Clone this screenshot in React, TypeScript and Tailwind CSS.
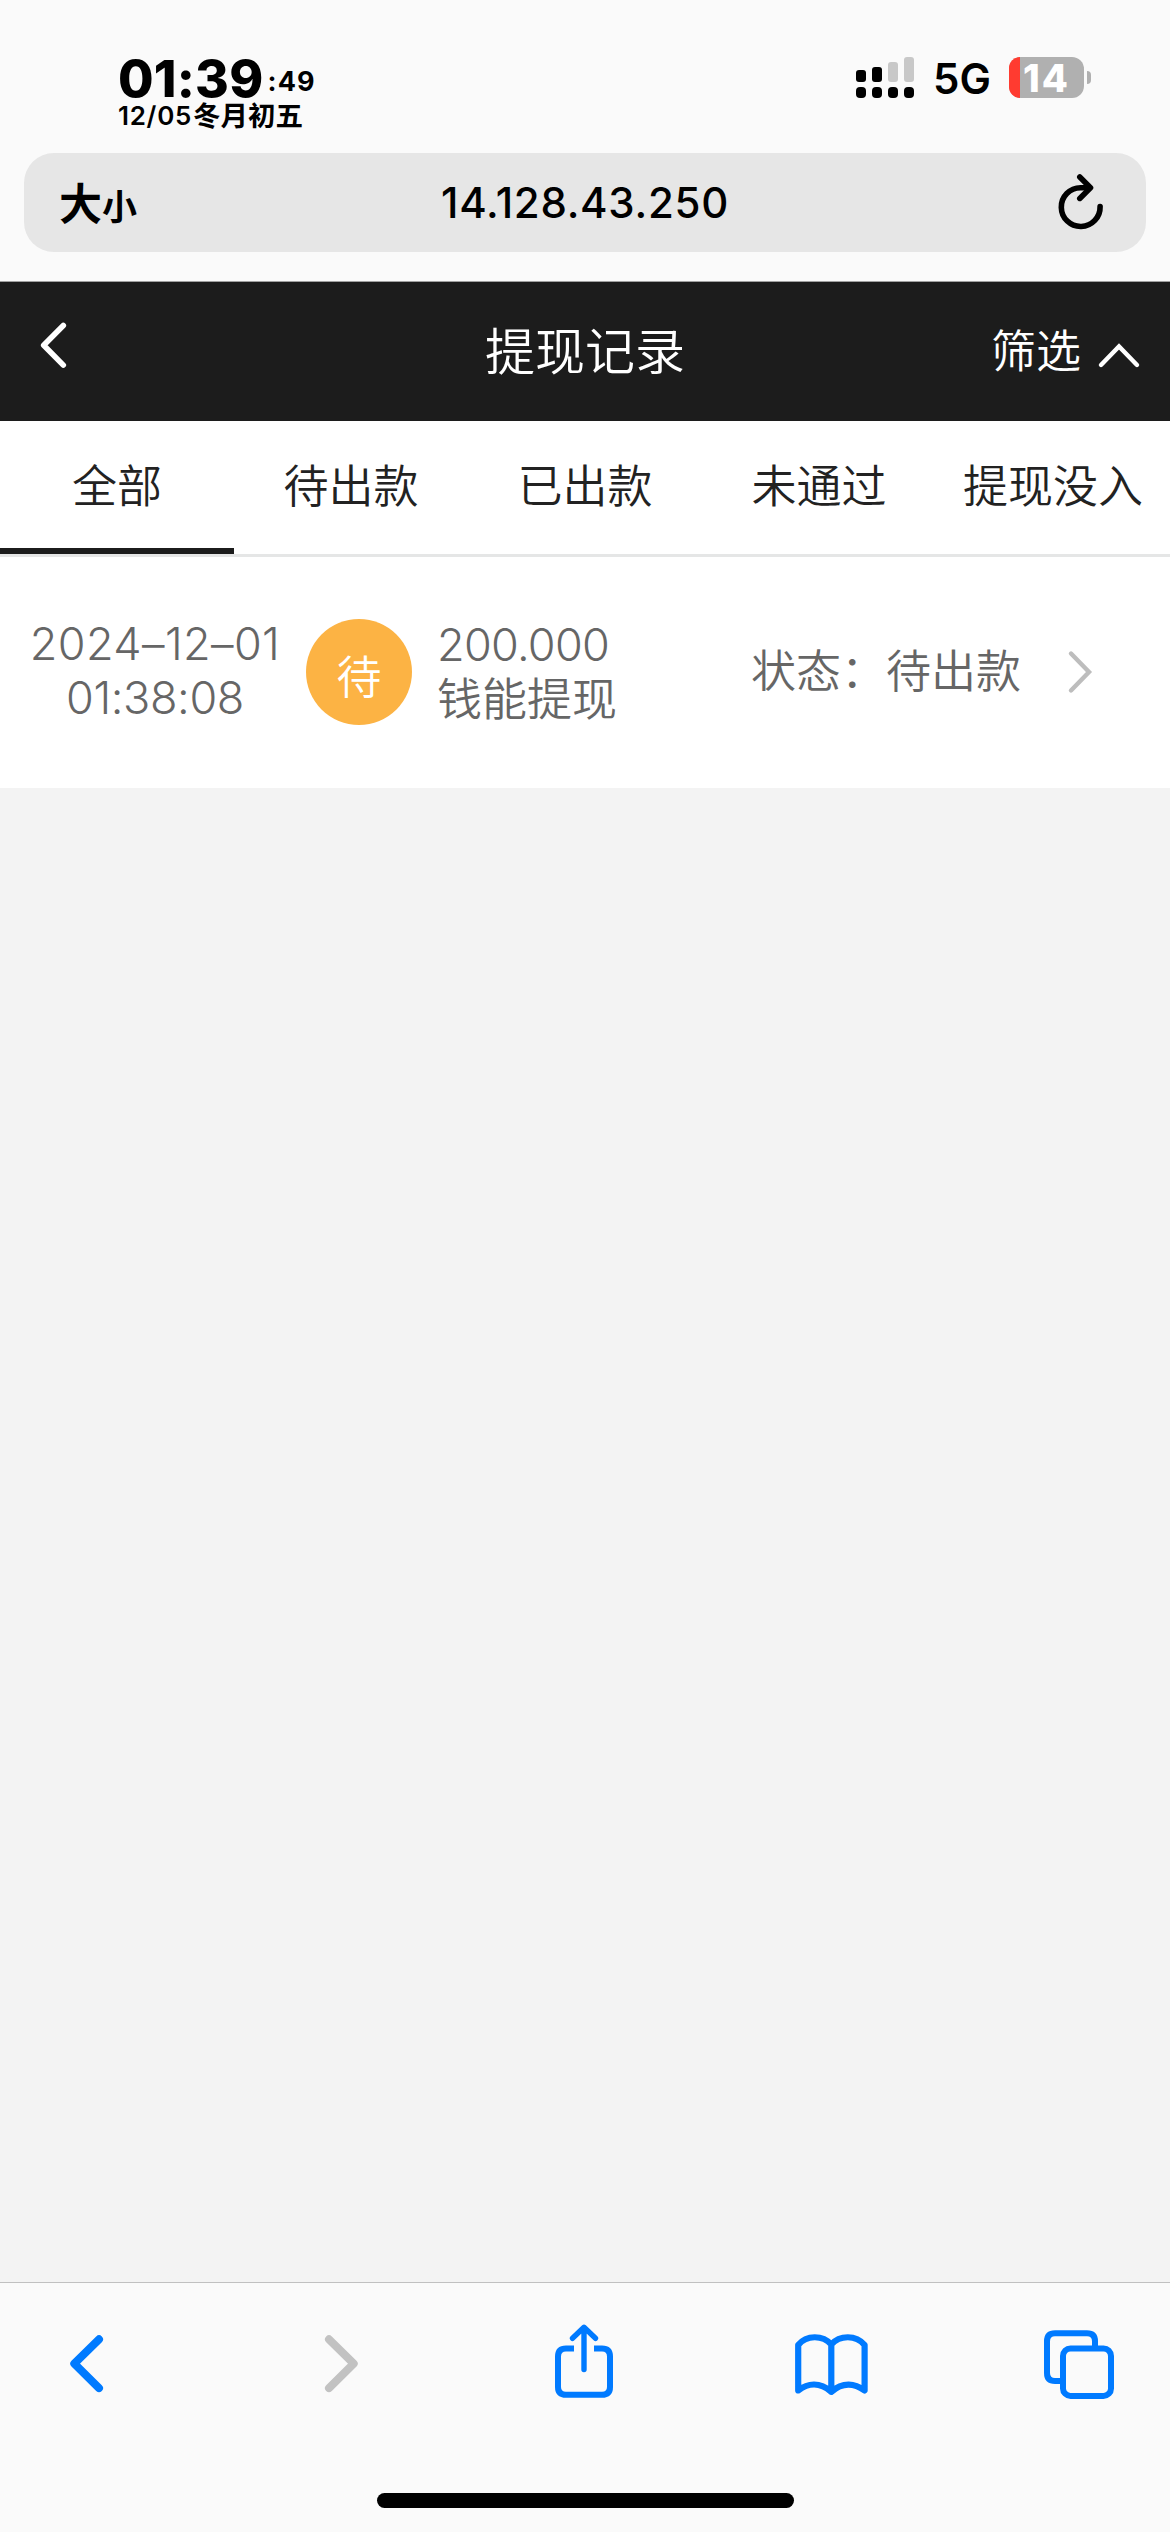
import React from 'react';

interface Tab {
  id: string;
  label: string;
}

interface WithdrawRecord {
  date: string;
  time: string;
  badge: string;
  amount: string;
  method: string;
  status: string;
}

const tabs: Tab[] = [
  { id: 'all', label: '全部' },
  { id: 'pending', label: '待出款' },
  { id: 'paid', label: '已出款' },
  { id: 'rejected', label: '未通过' },
  { id: 'forfeited', label: '提现没入' },
];

const records: WithdrawRecord[] = [
  {
    date: '2024–12–01',
    time: '01:38:08',
    badge: '待',
    amount: '200.000',
    method: '钱能提现',
    status: '待出款',
  },
];

const SignalIcon: React.FC = () => (
  <svg width="58" height="41" viewBox="0 0 58 41" className="mt-[57px]">
    <rect x="0" y="13" width="10" height="12" rx="3" fill="#000" />
    <rect x="16" y="10" width="10" height="15" rx="3" fill="#000" />
    <rect x="32" y="5" width="10" height="20" rx="3" fill="#c8c8c8" />
    <rect x="48" y="0" width="10" height="25" rx="3" fill="#c8c8c8" />
    <rect x="0" y="30" width="10" height="11" rx="4" fill="#000" />
    <rect x="16" y="30" width="10" height="11" rx="4" fill="#000" />
    <rect x="32" y="30" width="10" height="11" rx="4" fill="#000" />
    <rect x="48" y="30" width="10" height="11" rx="4" fill="#000" />
  </svg>
);

const StatusBar: React.FC = () => (
  <div className="flex h-[153px] items-start justify-between pl-[118px] pr-[79px] text-black">
    <div className="flex flex-col pt-[54px]">
      <div className="flex h-[48px] items-start">
        <span className="text-[51.5px] font-extrabold leading-[48px] tracking-[0.2px]">01:39</span>
        <span className="ml-[4px] mt-[14px] text-[27px] font-bold leading-[28px] tracking-[1.2px]">:49</span>
      </div>
      <div className="flex h-[28px] items-center whitespace-nowrap leading-[28px]">
        <span className="text-[26px] font-semibold tracking-[0.7px]">12/05</span>
        <span className="ml-[1px] text-[27.5px] font-bold">冬月初五</span>
      </div>
    </div>
    <div className="flex items-start">
      <SignalIcon />
      <span className="ml-[19px] mt-[54px] w-[58px] text-[42px] font-semibold leading-[50px]">5G</span>
      <div className="ml-[18px] mt-[57px] flex h-[41px] w-[75px] items-center rounded-[12px] bg-[#b0b0b0]">
        <div className="h-[41px] w-[11px] rounded-l-[11px] bg-[#ff3b30]" />
        <span className="ml-[3px] text-[38px] font-extrabold leading-[46px] tracking-[2px] text-white">14</span>
      </div>
      <div className="ml-[3px] mt-[71px] h-[13px] w-[4px] rounded-r-full bg-[#b0b0b0]" />
    </div>
  </div>
);

const AddressBar: React.FC = () => (
  <div className="mx-[24px] grid h-[99px] grid-cols-3 items-center rounded-[30px] bg-[#e6e6e6] text-black">
    <div className="flex items-baseline pl-[35px] pt-[3px] font-bold leading-none">
      <span className="text-[43px]">大</span>
      <span className="text-[35px]">小</span>
    </div>
    <span className="text-center text-[42px] font-medium leading-[50px] tracking-[0.7px]">14.128.43.250</span>
    <svg
      width="50"
      height="60"
      viewBox="1056 171 50 60"
      fill="none"
      stroke="#000"
      strokeWidth="5.6"
      strokeLinecap="round"
      strokeLinejoin="round"
      className="mr-[40px] justify-self-end"
    >
      <path d="M1089 185.700H1080.500A19.400 19.400 0 1 0 1100.100 204.500" />
      <path d="M1079.800 175L1090.500 185.700L1079.800 196.400" />
    </svg>
  </div>
);

const PageHeader: React.FC = () => (
  <header className="mt-[29px] flex h-[140px] items-center border-t border-[#a0a0a0] bg-[#1c1c1c] font-[350] text-white">
    <div className="w-[385px] pl-[38px]">
      <svg
        width="32"
        height="48"
        viewBox="38 321 32 48"
        fill="none"
        stroke="#fff"
        strokeWidth="5.6"
        strokeLinecap="round"
        strokeLinejoin="round"
        className="mb-[13px]"
      >
        <path d="M63.300 325.500L43.700 345.300L63.300 365.100" />
      </svg>
    </div>
    <h1 className="w-[400px] text-center text-[50px] leading-[70px]">提现记录</h1>
    <div className="flex flex-1 items-center justify-end pr-[28px]">
      <span className="text-[45px] leading-[64px]">筛选</span>
      <svg
        width="46"
        height="30"
        viewBox="0 0 46 30"
        fill="none"
        stroke="#fff"
        strokeWidth="4.4"
        strokeLinecap="round"
        className="ml-[15px] mt-[6px]"
      >
        <path d="M5 25L23 6.500L41 25" />
      </svg>
    </div>
  </header>
);

const TabBar: React.FC<{ active: string }> = ({ active }) => (
  <nav className="flex h-[136px] border-b-[3px] border-[#e5e6e6] bg-white">
    {tabs.map((tab) => (
      <button
        key={tab.id}
        className={`flex h-[133px] w-[234px] items-center justify-center whitespace-nowrap border-b-[6px] pt-[5px] text-[45px] font-[350] leading-[64px] text-[#222] ${
          active === tab.id ? 'border-[#1c1c1c]' : 'border-transparent'
        }`}
      >
        {tab.label}
      </button>
    ))}
  </nav>
);

const RecordRow: React.FC<{ record: WithdrawRecord }> = ({ record }) => (
  <div className="flex h-[231px] items-center bg-white pb-px text-[45px] font-[350] leading-[54px] text-[#666]">
    <div className="ml-[29px] w-[252px] whitespace-nowrap pb-[2px] text-center">
      <div className="tracking-[0.4px]">{record.date}</div>
      <div className="tracking-[-0.4px]">{record.time}</div>
    </div>
    <div className="ml-[25px] flex h-[106px] w-[106px] items-center justify-center rounded-full bg-[#fcb344] text-white">
      <span className="mt-[11px]">{record.badge}</span>
    </div>
    <div className="ml-[25px] w-[314px]">
      <div className="pb-[1px] tracking-[-0.7px]">{record.amount}</div>
      <div>{record.method}</div>
    </div>
    <div className="whitespace-nowrap">状态：{record.status}</div>
    <svg
      width="30"
      height="46"
      viewBox="0 0 30 46"
      fill="none"
      stroke="#bdbdbd"
      strokeWidth="4.4"
      strokeLinecap="round"
      className="ml-[45px]"
    >
      <path d="M5 4.500L23 23L5 41.500" />
    </svg>
  </div>
);

const BottomToolbar: React.FC = () => (
  <footer className="flex h-[250px] flex-col items-center justify-between border-t border-[#c0c0c0] bg-[#fafafa] pb-[24px]">
    <div className="flex w-full items-center pl-[64px] pt-[40px] text-[#007aff]">
      <svg width="45" height="80" viewBox="64 2323 45 80" fill="none" stroke="currentColor" strokeWidth="8" strokeLinecap="round" strokeLinejoin="round">
        <path d="M99 2339.300L74.300 2363.700L99 2388.100" />
      </svg>
      <svg width="45" height="80" viewBox="318 2323 45 80" fill="none" stroke="#c2c2c2" strokeWidth="8" strokeLinecap="round" strokeLinejoin="round" className="ml-[209px]">
        <path d="M329 2339.300L353.700 2363.700L329 2388.100" />
      </svg>
      <svg width="70" height="80" viewBox="549 2323 70 80" fill="none" stroke="currentColor" strokeWidth="6" strokeLinejoin="round" className="ml-[186px]">
        <path d="M574 2348.500H566Q558 2348.500 558 2356.500V2387Q558 2394.800 566 2394.800H602Q610 2394.800 610 2387V2356.500Q610 2348.500 602 2348.500H594" />
        <path d="M584 2369.500V2327.500M572.500 2338.300L584 2327.300L595.500 2338.300" strokeWidth="5.4" strokeLinecap="round" />
      </svg>
      <svg width="80" height="80" viewBox="791 2323 80 80" fill="none" stroke="currentColor" strokeWidth="6.2" strokeLinecap="round" strokeLinejoin="round" className="ml-[172px]">
        <path d="M831.300 2344.500C823 2335 806.500 2334.500 798.200 2345V2390.500C807.500 2383.500 819.500 2381.500 831.300 2391.800C843 2381.500 855 2383.500 864.600 2390.500V2345C856 2334.500 839.500 2335 831.300 2344.500ZM831.300 2344.500V2391.800" />
      </svg>
      <svg width="80" height="80" viewBox="1040 2323 80 80" fill="none" stroke="currentColor" strokeWidth="6" className="ml-[169px]">
        <rect x="1063" y="2348.400" width="48" height="47.500" rx="7.500" />
        <path d="M1063 2381H1055Q1047 2381 1047 2373V2341.200Q1047 2333.200 1055 2333.200H1087Q1095 2333.200 1095 2341.200V2348.400" />
      </svg>
    </div>
    <div className="h-[15px] w-[417px] rounded-full bg-black" />
  </footer>
);

const App: React.FC = () => {
  return (
    <div className="flex h-[2532px] w-[1170px] flex-col overflow-hidden bg-[#fafafa] font-['Inter','Noto_Sans_CJK_SC',sans-serif]">
      <StatusBar />
      <AddressBar />
      <PageHeader />
      <TabBar active="all" />
      <main className="flex-1 bg-[#f3f3f3]">
        {records.map((record) => (
          <RecordRow key={record.date + record.time} record={record} />
        ))}
      </main>
      <BottomToolbar />
    </div>
  );
};

export default App;
